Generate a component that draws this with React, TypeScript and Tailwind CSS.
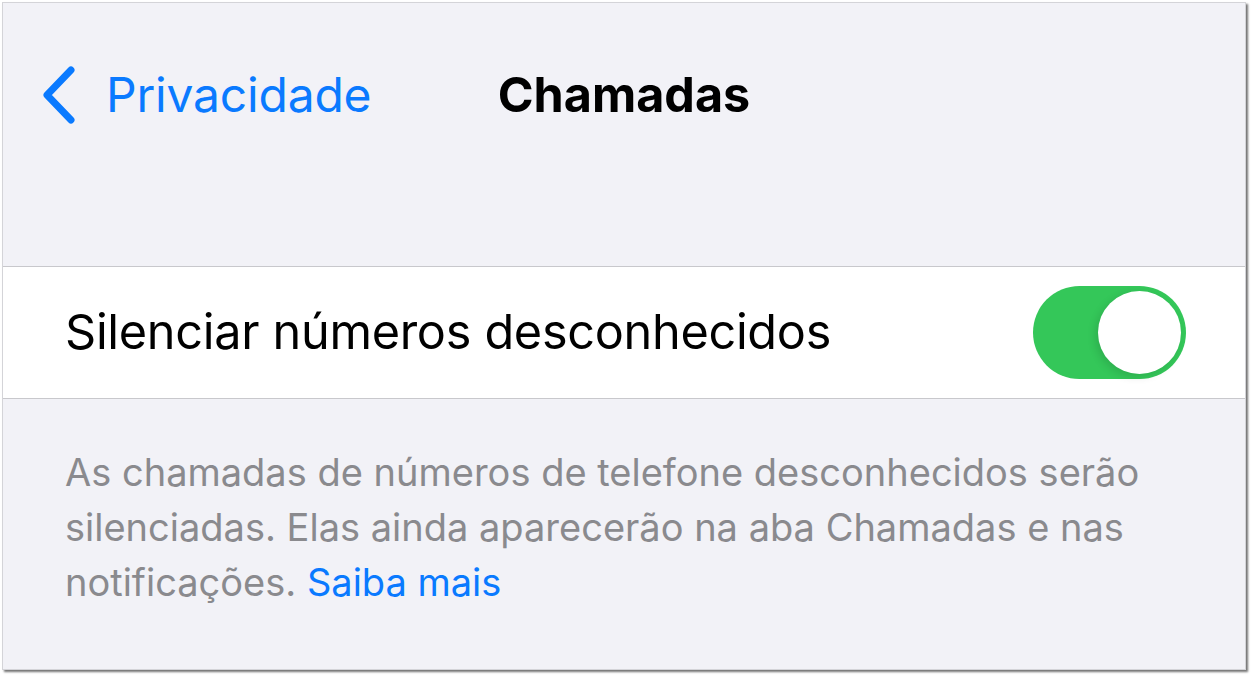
import { useState } from 'react';

export default function App() {
  const [on, setOn] = useState(true);

  return (
    <div className="w-[1252px] h-[677px] bg-white pl-[2px] pt-[2px]" style={{ fontFamily: 'Inter, "Noto Sans", sans-serif' }}>
      <div className="w-[1244px] h-[668px] bg-[#f2f2f7] border border-[#d4d4d8] shadow-[2px_2px_2px_rgba(0,0,0,0.55)] flex flex-col overflow-hidden">
        {/* nav bar */}
        <div className="h-[263px] shrink-0">
          <div className="relative h-[184px] flex items-center pl-[36px]">
            <button className="flex items-center text-[#0a7aff]">
              <svg width="38" height="60" viewBox="0 0 38 60" fill="none" className="mr-[29px]">
                <path d="M32 5 L8 30 L32 55" stroke="#0a7aff" strokeWidth="7" strokeLinecap="round" strokeLinejoin="round" />
              </svg>
              <span className="text-[48px] tracking-[-0.2px] leading-[60px]">Privacidade</span>
            </button>
            <div className="absolute left-0 right-0 top-[62px] text-center text-[48.5px] font-bold text-black leading-[60px] pointer-events-none">Chamadas</div>
          </div>
        </div>

        {/* toggle row */}
        <div className="border-y border-[#c8c8cc] bg-white h-[133px] shrink-0 flex items-center justify-between pl-[62px] pr-[59px]">
          <span className="text-[48.6px] text-black tracking-[-0.3px]">Silenciar números desconhecidos</span>
          <button
            onClick={() => setOn(!on)}
            className={`w-[153px] h-[93px] rounded-full flex items-center p-[5px] ${on ? 'bg-[#34c759] justify-end' : 'bg-[#e9e9ea] justify-start'}`}
          >
            <span className="w-[83px] h-[83px] rounded-full bg-white shadow-[-3px_3px_8px_rgba(0,0,0,0.12)]" />
          </button>
        </div>

        {/* footer */}
        <p className="pl-[62px] pr-[60px] pt-[46px] text-[38px] leading-[55px] text-[#8a8a8e]">
          As chamadas de números de telefone desconhecidos serão silenciadas. Elas ainda aparecerão na aba Chamadas e nas notificações. <span className="text-[#0a7aff]">Saiba mais</span>
        </p>
      </div>
    </div>
  );
}
